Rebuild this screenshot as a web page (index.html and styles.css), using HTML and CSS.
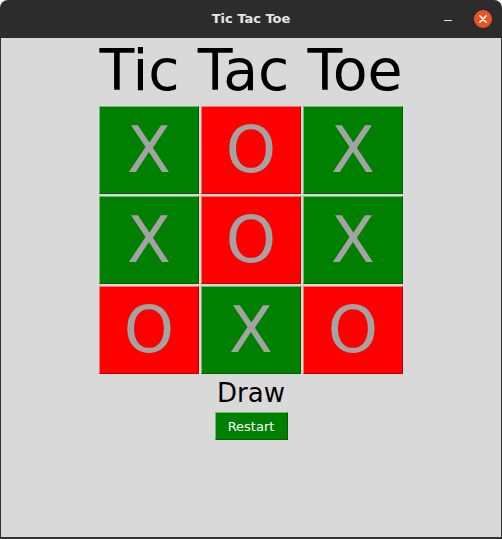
FILE: index.html
```html
<!DOCTYPE html>
<html>
<head>
<meta charset="utf-8">
<link rel="stylesheet" href="styles.css">
</head>
<body>
<div class="window">
  <div class="titlebar">
    <span class="wtitle">Tic Tac Toe</span>
    <div class="controls">
      <span class="minimize"></span>
      <span class="close">
        <svg width="18" height="18" viewBox="0 0 18 18"><circle cx="9" cy="9" r="9" fill="#e95420"/><path d="M5.8 5.8 L12.2 12.2 M12.2 5.8 L5.8 12.2" stroke="#fff" stroke-width="1.6" stroke-linecap="round"/></svg>
      </span>
    </div>
  </div>
  <div class="content">
    <h1 class="title">Tic Tac Toe</h1>
    <div class="board">
      <div class="cell green">X</div>
      <div class="cell red">O</div>
      <div class="cell green">X</div>
      <div class="cell green">X</div>
      <div class="cell red">O</div>
      <div class="cell green">X</div>
      <div class="cell red">O</div>
      <div class="cell green">X</div>
      <div class="cell red">O</div>
    </div>
    <div class="status">Draw</div>
    <button class="restart">Restart</button>
  </div>
</div>
</body>
</html>
```
FILE: styles.css
```css
html, body {
  margin: 0;
  padding: 0;
  background: #ffffff;
}
.window {
  width: 502px;
  height: 539px;
  display: flex;
  flex-direction: column;
  box-sizing: border-box;
  font-family: "DejaVu Sans", sans-serif;
}
.titlebar {
  height: 38px;
  flex: none;
  background: #2c2c2c;
  border-radius: 8px 8px 0 0;
  display: flex;
  align-items: center;
  justify-content: center;
  position: relative;
}
.wtitle {
  color: #e6e6e6;
  font-weight: bold;
  font-size: 13px;
  margin-top: -1px;
}
.controls {
  position: absolute;
  right: 10px;
  top: 10px;
  display: flex;
  align-items: center;
  gap: 22px;
}
.minimize {
  display: block;
  width: 8px;
  height: 1px;
  background: #e6e6e6;
  margin-top: 3px;
}
.close {
  display: block;
  width: 18px;
  height: 18px;
}
.close svg { display: block; }
.content {
  flex: 1;
  background: #d9d9d9;
  border: solid #333333;
  border-width: 0 1px 2px 1px;
  display: flex;
  flex-direction: column;
  align-items: center;
}
.title {
  margin: 0;
  font-weight: normal;
  font-size: 57px;
  line-height: 64px;
  color: #000;
  padding-top: 0;
}
.board {
  margin-top: 4px;
  display: grid;
  grid-template-columns: repeat(3, 100px);
  grid-template-rows: repeat(3, 88px);
  gap: 2px;
}
.cell {
  box-sizing: border-box;
  border: 1px solid;
  border-color: rgba(255,255,255,0.45) rgba(0,0,0,0.25) rgba(0,0,0,0.25) rgba(255,255,255,0.45);
  color: #a3a3a3;
  font-size: 64px;
  display: flex;
  align-items: center;
  justify-content: center;
  line-height: 1;
}
.green { background: #008000; }
.red { background: #ff0000; }
.status {
  margin-top: 4px;
  font-size: 26px;
  line-height: 30px;
  color: #000;
}
.restart {
  margin-top: 4px;
  width: 73px;
  height: 28px;
  padding: 0;
  background: #008000;
  color: #ffffff;
  font-family: "DejaVu Sans", sans-serif;
  font-size: 13px;
  border: 1px solid;
  border-color: rgba(255,255,255,0.45) rgba(0,0,0,0.25) rgba(0,0,0,0.25) rgba(255,255,255,0.45);
}
```
